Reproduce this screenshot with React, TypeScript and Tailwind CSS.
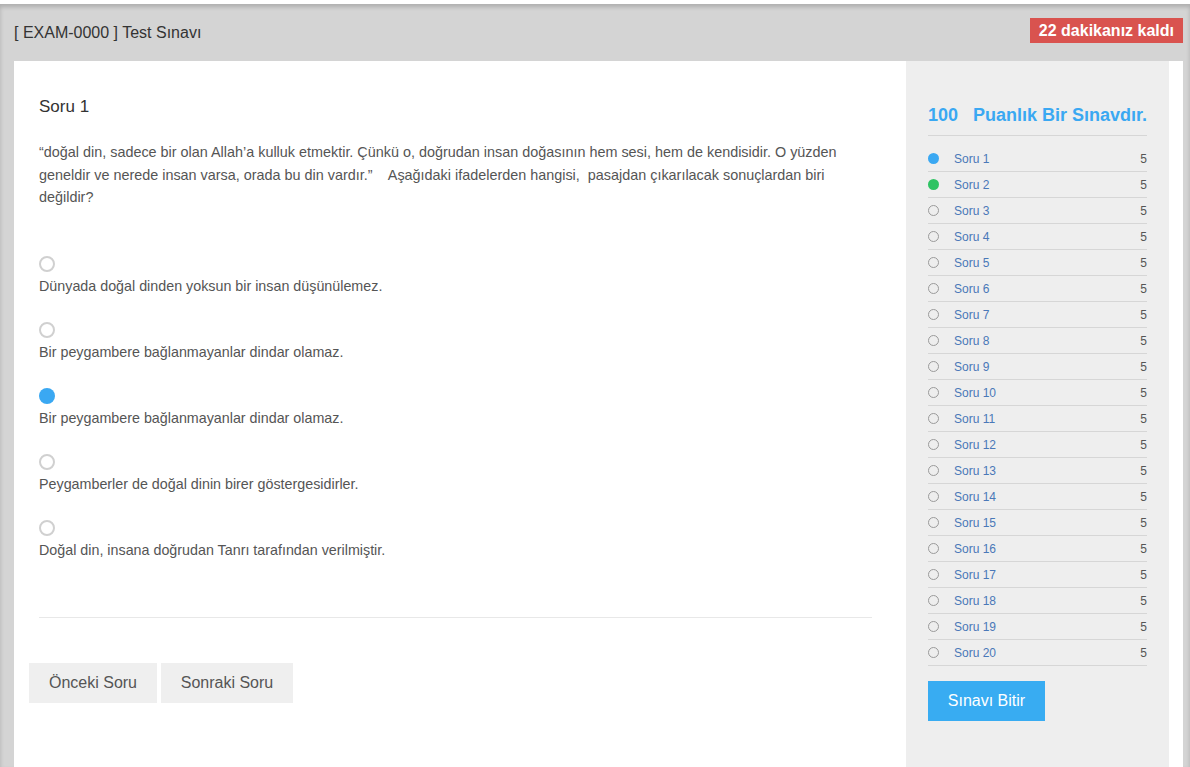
import React, { useState } from 'react';

const options = [
  'Dünyada doğal dinden yoksun bir insan düşünülemez.',
  'Bir peygambere bağlanmayanlar dindar olamaz.',
  'Bir peygambere bağlanmayanlar dindar olamaz.',
  'Peygamberler de doğal dinin birer göstergesidirler.',
  'Doğal din, insana doğrudan Tanrı tarafından verilmiştir.',
];

const questions = Array.from({ length: 20 }, (_, i) => ({
  id: i + 1,
  status: i === 0 ? 'current' : i === 1 ? 'answered' : 'empty',
  points: 5,
}));

const App: React.FC = () => {
  const [selected, setSelected] = useState(2);

  return (
    <div className="min-h-[767px] bg-white pt-[4px] font-['Liberation_Sans',Arial,sans-serif]">
      <div className="min-h-[763px] bg-[#d4d4d4] shadow-[inset_0_3px_4px_rgba(0,0,0,0.18)] pl-[14px] pr-[7px]">
        {/* Header */}
        <div className="flex items-center justify-between h-[57px]">
          <div className="text-[16px] text-[#333]">[ EXAM-0000 ] Test Sınavı</div>
          <div className="bg-[#d9534f] text-white font-bold text-[16px] h-[25px] leading-[25px] px-[9px] -mt-[5px]">
            22 dakikanız kaldı
          </div>
        </div>

        {/* Content */}
        <div className="flex bg-white min-h-[706px]">
          {/* Question */}
          <div className="w-[892px] pl-[25px] pr-[34px] pt-[35px]">
            <h2 className="text-[17px] leading-[22px] text-[#333] mb-[23px]">Soru 1</h2>
            <p className="text-[14.4px] leading-[22.5px] text-[#555]">
              “doğal din, sadece bir olan Allah’a kulluk etmektir. Çünkü o, doğrudan insan doğasının hem sesi, hem de kendisidir. O yüzden geneldir ve nerede insan varsa, orada bu din vardır.”&nbsp;&nbsp;&nbsp; Aşağıdaki ifadelerden hangisi,&nbsp; pasajdan çıkarılacak sonuçlardan biri değildir?
            </p>

            <div className="mt-[47px] flex flex-col gap-[26px]">
              {options.map((opt, i) => (
                <label key={i} className="block cursor-pointer" onClick={() => setSelected(i)}>
                  <span
                    className={
                      i === selected
                        ? 'block w-[16px] h-[16px] rounded-full bg-[#3aa8f2]'
                        : 'block w-[16px] h-[16px] rounded-full border-2 border-[#d0d0d0] bg-white'
                    }
                  />
                  <span className="block mt-[4px] text-[14.3px] leading-[20px] text-[#555]">{opt}</span>
                </label>
              ))}
            </div>

            <div className="mt-[57px] border-t border-[#e8e8e8]" />

            <div className="mt-[45px] -ml-[10px] flex gap-[4px]">
              <button className="w-[128px] h-[40px] bg-[#efefef] text-[16px] text-[#555]">Önceki Soru</button>
              <button className="w-[132px] h-[40px] bg-[#efefef] text-[16px] text-[#555]">Sonraki Soru</button>
            </div>
          </div>

          {/* Sidebar */}
          <div className="w-[263px] bg-[#eeeeee] px-[22px] pt-[42px]">
            <div className="pb-[8px] border-b border-[#d6d6d6] text-[18px] leading-[24px] font-bold text-[#3aa8f2] whitespace-nowrap">
              100&nbsp;&nbsp; Puanlık Bir Sınavdır.
            </div>
            <ul className="mt-[10px]">
              {questions.map((q) => (
                <li key={q.id} className="h-[26px] flex items-center border-b border-[#d6d6d6] text-[12px]">
                  <span
                    className={
                      q.status === 'current'
                        ? 'w-[11px] h-[11px] rounded-full bg-[#3aa8f2]'
                        : q.status === 'answered'
                        ? 'w-[11px] h-[11px] rounded-full bg-[#2fc363]'
                        : 'w-[11px] h-[11px] rounded-full border border-[#9a9a9a]'
                    }
                  />
                  <span className="ml-[15px] flex-1 text-[#4a78b8]">Soru {q.id}</span>
                  <span className="text-[#555]">{q.points}</span>
                </li>
              ))}
            </ul>
            <button className="mt-[15px] w-[117px] h-[40px] bg-[#38acf2] text-white text-[16px]">Sınavı Bitir</button>
          </div>

          <div className="w-[14px]" />
        </div>
      </div>
    </div>
  );
};

export default App;
